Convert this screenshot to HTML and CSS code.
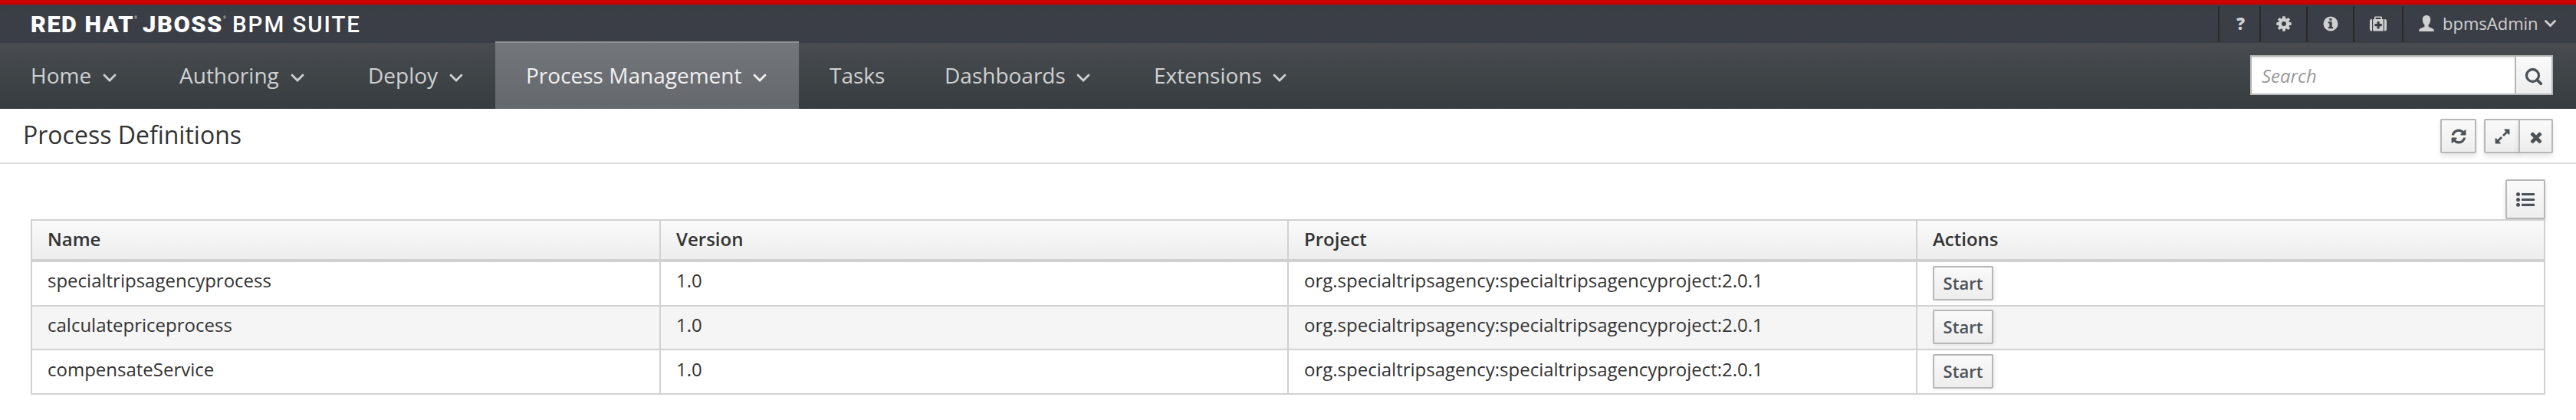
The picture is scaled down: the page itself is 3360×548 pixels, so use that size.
FILE: index.html
```
<!DOCTYPE html>
<html lang="en">
<head>
<meta charset="utf-8">
<title>Process Definitions</title>
<link rel="stylesheet" href="styles.css">
</head>
<body>
<header class="topbar">
  <svg class="brand" width="480" height="48" viewBox="0 0 480 48" role="img" aria-label="Red Hat JBoss BPM Suite">
    <g class="brand-text">
      <text class="heavy" x="40" y="35.5" textLength="135" lengthAdjust="spacingAndGlyphs">RED HAT</text>
      <text class="mark" x="175" y="19">®</text>
      <text class="heavy" x="186" y="35.5" textLength="105" lengthAdjust="spacingAndGlyphs">JBOSS</text>
      <text class="mark" x="291" y="19">®</text>
      <text class="light" x="303" y="35.5" textLength="168" lengthAdjust="spacingAndGlyphs">BPM SUITE</text>
    </g>
  </svg>
  <div class="utilities">
    <a class="util help">?</a>
    <a class="util gear"><svg width="20" height="20" viewBox="-10 -10 20 20"><g fill="currentColor"><path fill-rule="evenodd" d="M-7.2 0a7.2 7.2 0 1 0 14.4 0a7.2 7.2 0 1 0-14.4 0zM-3 0a3 3 0 1 1 6 0a3 3 0 1 1-6 0z"/><path id="tooth" d="M-2.3-6l.6-3.7h3.4l.6 3.7z"/><use href="#tooth" transform="rotate(45)"/><use href="#tooth" transform="rotate(90)"/><use href="#tooth" transform="rotate(135)"/><use href="#tooth" transform="rotate(180)"/><use href="#tooth" transform="rotate(225)"/><use href="#tooth" transform="rotate(270)"/><use href="#tooth" transform="rotate(315)"/></g></svg></a>
    <a class="util info"><svg width="20" height="20" viewBox="0 0 20 20"><path fill="currentColor" fill-rule="evenodd" d="M10 .5a9.5 9.5 0 1 0 0 19a9.5 9.5 0 1 0 0-19zM8.3 3h3.2v2.8H8.3zM6.8 7.3h4.9v6.6h1.5v2.3H6.8v-2.3h1.6V9.5H6.8z"/></svg></a>
    <a class="util kit"><svg width="22" height="20" viewBox="0 0 22 20"><path fill="currentColor" fill-rule="evenodd" d="M3 4v15.5H2.2Q0 19.500 0 17.300V6.200Q0 4 2.200 4zM19 4h.8Q22 4 22 6.200v11.100q0 2.200-2.200 2.200H19zM4.200 4H6V1.700Q6 .5 7.200.5h7.600Q16 .5 16 1.700V4h1.800v15.500H4.200zM7.700 4h6.600V2.100H7.700zM9.500 7v3.100H6.400v3.200h3.100v3.100h3.200v-3.100h3.100v-3.200h-3.100V7z"/></svg></a>
    <a class="util user"><svg class="person" width="20" height="21" viewBox="0 0 20 21"><path fill="currentColor" d="M10 0c3.400 0 5.200 2.300 5.200 5.600 0 3.100-1.200 5.600-2.700 7v1.900c0 .9 6.300 2 7 4.400.3.900.5 1.500.5 2.100H0c0-.6.200-1.200.5-2.100.7-2.400 7-3.500 7-4.400v-1.900c-1.500-1.400-2.700-3.900-2.700-7C4.800 2.300 6.600 0 10 0z"/></svg><span>bpmsAdmin</span><svg class="caret" width="15" height="10" viewBox="0 0 15 10"><path d="M1.500 1.500l6 6 6-6"/></svg></a>
  </div>
</header>
<nav class="navbar">
  <a class="nav home">Home<svg class="chev" width="18" height="12" viewBox="0 0 18 12"><path d="M2 2l7 7 7-7"/></svg></a>
  <a class="nav authoring">Authoring<svg class="chev" width="18" height="12" viewBox="0 0 18 12"><path d="M2 2l7 7 7-7"/></svg></a>
  <a class="nav deploy">Deploy<svg class="chev" width="18" height="12" viewBox="0 0 18 12"><path d="M2 2l7 7 7-7"/></svg></a>
  <a class="nav process active">Process Management<svg class="chev" width="18" height="12" viewBox="0 0 18 12"><path d="M2 2l7 7 7-7"/></svg></a>
  <a class="nav tasks">Tasks</a>
  <a class="nav dashboards">Dashboards<svg class="chev" width="18" height="12" viewBox="0 0 18 12"><path d="M2 2l7 7 7-7"/></svg></a>
  <a class="nav extensions">Extensions<svg class="chev" width="18" height="12" viewBox="0 0 18 12"><path d="M2 2l7 7 7-7"/></svg></a>
  <div class="search">
    <div class="search-field">Search</div>
    <div class="search-button"><svg width="24" height="24" viewBox="0 0 24 24"><circle cx="10.500" cy="10.500" r="8" fill="none" stroke="currentColor" stroke-width="3.300"/><path d="M16 16l5.200 5.200" stroke="currentColor" stroke-width="3.800" stroke-linecap="round"/></svg></div>
  </div>
</nav>
<section class="titlebar">
  <h1>Process Definitions</h1>
  <div class="tools">
    <div class="button refresh"><svg width="22" height="22" viewBox="0 0 1792 1792"><path fill="currentColor" d="M1639 1056q0 5-1 7-64 268-268 434.500t-478 166.500q-146 0-282.500-55t-243.500-157l-129 129q-19 19-45 19t-45-19-19-45v-448q0-26 19-45t45-19h448q26 0 45 19t19 45-19 45l-137 137q71 66 161 102t187 36q134 0 250-65t186-179q11-17 53-117 8-23 30-23h192q13 0 22.500 9.500t9.500 22.500zm25-800v448q0 26-19 45t-45 19h-448q-26 0-45-19t-19-45 19-45l138-138q-148-137-349-137-134 0-250 65t-186 179q-11 17-53 117-8 23-30 23h-199q-13 0-22.500-9.500t-9.500-22.500v-7q65-268 270-434.500t480-166.500q146 0 284 55.500t245 156.500l130-129q19-19 45-19t45 19 19 45z"/></svg></div>
    <div class="group">
      <div class="button expand"><svg width="22" height="22" viewBox="0 0 1792 1792"><path fill="currentColor" d="M883 1056q0 13-10 23l-332 332 144 144q19 19 19 45t-19 45-45 19h-448q-26 0-45-19t-19-45v-448q0-26 19-45t45-19 45 19l144 144 332-332q10-10 23-10t23 10l114 114q10 10 10 23zm781-864v448q0 26-19 45t-45 19-45-19l-144-144-332 332q-10 10-23 10t-23-10l-114-114q-10-10-10-23t10-23l332-332-144-144q-19-19-19-45t19-45 45-19h448q26 0 45 19t19 45z"/></svg></div>
      <div class="button close"><svg width="22" height="22" viewBox="0 0 1792 1792"><path fill="currentColor" d="M1490 1322q0 40-28 68l-136 136q-28 28-68 28t-68-28l-294-294-294 294q-28 28-68 28t-68-28l-136-136q-28-28-28-68t28-68l294-294-294-294q-28-28-28-68t28-68l136-136q28-28 68-28t68 28l294 294 294-294q28-28 68-28t68 28l136 136q28 28 28 68t-28 68l-294 294 294 294q28 28 28 68z"/></svg></div>
    </div>
  </div>
</section>
<main class="content">
  <div class="button list"><svg width="24" height="19" viewBox="0 0 24 19"><g fill="currentColor"><circle cx="2.500" cy="2.500" r="2.500"/><circle cx="2.500" cy="9.500" r="2.500"/><circle cx="2.500" cy="16.300" r="2.500"/><path d="M7 .9h17v3.200H7zM7 7.900h17v3.200H7zM7 14.700h17v3.200H7z"/></g></svg></div>
  <div class="table">
    <div class="row head"><div class="cell">Name</div><div class="cell">Version</div><div class="cell">Project</div><div class="cell">Actions</div></div>
    <div class="row first"><div class="cell">specialtripsagencyprocess</div><div class="cell">1.0</div><div class="cell">org.specialtripsagency:specialtripsagencyproject:2.0.1</div><div class="cell"><div class="button start">Start</div></div></div>
    <div class="row second"><div class="cell">calculatepriceprocess</div><div class="cell">1.0</div><div class="cell">org.specialtripsagency:specialtripsagencyproject:2.0.1</div><div class="cell"><div class="button start">Start</div></div></div>
    <div class="row third"><div class="cell">compensateService</div><div class="cell">1.0</div><div class="cell">org.specialtripsagency:specialtripsagencyproject:2.0.1</div><div class="cell"><div class="button start">Start</div></div></div>
  </div>
</main>
</body>
</html>
```
FILE: styles.css
```
* { box-sizing: border-box; }
body {
  margin: 0;
  height: 548px;
  overflow: hidden;
  background: #fff;
  color: #333;
  font-family: "Open Sans", "Noto Sans", sans-serif;
  font-size: 24px;
}
svg { display: block; flex: none; }

.topbar {
  height: 56px;
  border-top: 6px solid #c00;
  background: linear-gradient(#393f45, #3b3e46 40%, #3a3e45);
  display: flex;
  justify-content: space-between;
}
.brand-text { fill: #fff; font-family: Roboto, "Open Sans", sans-serif; font-size: 30px; }
.heavy { font-weight: 900; letter-spacing: 1.5px; }
.light { font-weight: 500; letter-spacing: 2px; }
.mark { font-size: 5px; opacity: .7; }

.utilities { display: flex; padding-top: 2px; color: #cfd0d1; font-size: 22px; }
.util {
  height: 47px;
  border-left: 2px solid #292929;
  display: flex;
  align-items: center;
  justify-content: center;
  padding-bottom: 2px;
}
.help { width: 54px; font-weight: 800; padding: 0 0 3px 3px; }
.gear { width: 61px; }
.info { width: 61px; }
.kit { width: 64px; }
.user { width: 227px; justify-content: flex-start; padding-left: 20px; }
.user span { width: 124px; margin-left: 11px; line-height: 44px; margin-top: -2px; }
.caret { margin-left: 9px; }
.caret path, .chev path { fill: none; stroke: currentColor; stroke-width: 2.800; stroke-linecap: round; }

.navbar {
  height: 86px;
  background: linear-gradient(#484c50, #363c3f);
  display: flex;
  align-items: flex-end;
  color: #cfd0d1;
  font-size: 28px;
}
.nav { height: 86px; line-height: 84px; padding: 0 42px 0 40px; display: flex; white-space: nowrap; flex: none; }
.chev { margin: 40px 0 0 auto; }
.home { width: 194px; }
.authoring { width: 245px; }
.deploy { width: 207px; padding-left: 41px; }
.process { width: 396px; }
.tasks { width: 189px; }
.dashboards { width: 233px; padding-left: 1px; }
.extensions { width: 256px; padding-left: 41px; }
.active {
  height: 88px;
  border-top: 2px solid #909498;
  background: linear-gradient(#73767b, #64676c);
  color: #f1f1f1;
}
.search {
  margin: 0 30px 18px auto;
  width: 395px;
  height: 52px;
  border: 2px solid #b7b7b7;
  display: flex;
}
.search-field {
  flex: 1;
  background: #fff;
  box-shadow: inset 0 2px 2px rgba(3, 3, 3, .08);
  color: #999;
  font-size: 24px;
  font-style: italic;
  line-height: 50px;
  padding-left: 13px;
}
.search-button {
  width: 48px;
  border-left: 2px solid #b7b7b7;
  background: linear-gradient(#fafafa, #ededed);
  color: #4d5258;
  padding: 14px 0 0 11px;
}

.titlebar {
  height: 72px;
  border-bottom: 2px solid #dcdcdc;
  display: flex;
  justify-content: space-between;
  padding: 0 30px;
}
h1 { margin: 0; font-size: 32px; font-weight: 400; line-height: 67px; }
.tools { display: flex; gap: 10px; padding-top: 13px; }
.group { display: flex; }
.button {
  border: 2px solid #b7b7b7;
  border-radius: 2px;
  background: linear-gradient(#fafafa, #ededed);
  box-shadow: 0 4px 6px rgba(3, 3, 3, .1);
  color: #4d5258;
  display: flex;
  align-items: center;
  justify-content: center;
}
.refresh { width: 47px; height: 45px; }
.expand { width: 47px; height: 45px; border-radius: 2px 0 0 2px; }
.close { width: 45px; height: 45px; margin-left: -2px; border-radius: 0 2px 2px 0; padding-top: 2px; }

.content { padding: 20px 40px 0; }
.list { width: 52px; height: 52px; margin-left: auto; }
.table { border: 2px solid #d1d1d1; position: relative; }
.row { display: grid; grid-template-columns: 818px 819px 820px 1fr; border-bottom: 2px solid #d1d1d1; line-height: 47px; }
.cell { padding-left: 20px; border-left: 2px solid #d1d1d1; }
.cell:first-child { border-left: 0; }
.row.head { height: 54px; border-bottom-width: 4px; background: linear-gradient(#fafafa, #ededed); font-weight: 600; }
.row.first { height: 58px; }
.row.second { height: 57px; background: #f5f5f5; }
.row.third { height: 56px; border-bottom: 0; line-height: 49px; }
.start { width: 79px; height: 45px; margin-top: 5px; padding-bottom: 2px; font-size: 22px; font-weight: 600; line-height: 38px; box-shadow: 2px 1px 4px rgba(3, 3, 3, .08); }
.second .start { margin-top: 4px; }
```
